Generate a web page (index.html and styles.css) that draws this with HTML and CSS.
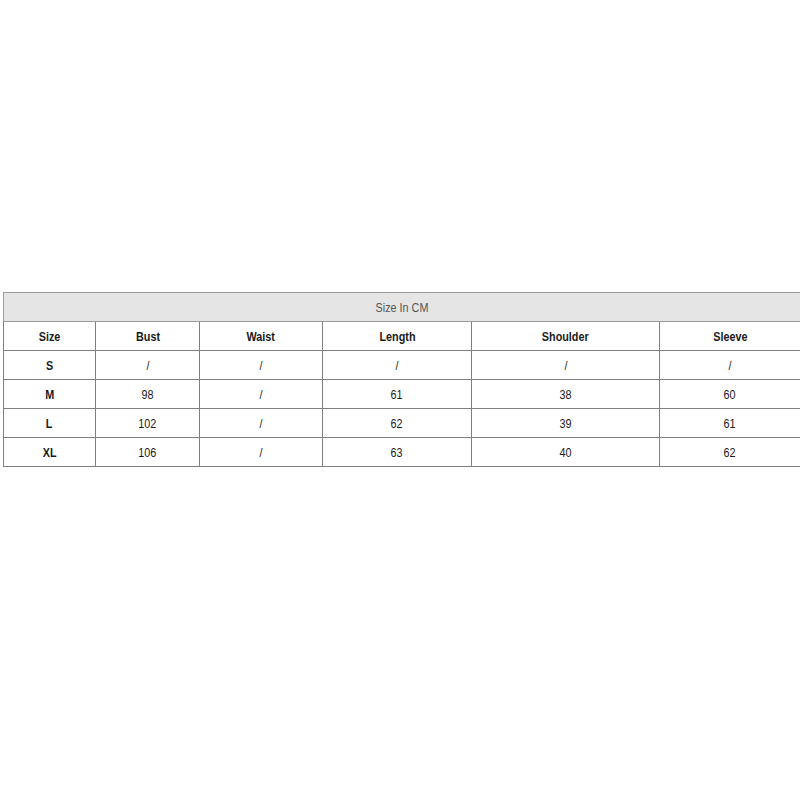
FILE: index.html
```html
<!DOCTYPE html>
<html>
<head>
<meta charset="utf-8">
<link rel="stylesheet" href="styles.css">
</head>
<body>
<div class="page">
<table class="size-table">
  <colgroup>
    <col class="c1"><col class="c2"><col class="c3"><col class="c4"><col class="c5"><col class="c6">
  </colgroup>
  <tr class="title-row"><td colspan="6"><span class="t">Size In CM</span></td></tr>
  <tr class="head-row">
    <th><span class="t">Size</span></th><th><span class="t">Bust</span></th><th><span class="t">Waist</span></th><th><span class="t">Length</span></th><th><span class="t">Shoulder</span></th><th><span class="t">Sleeve</span></th>
  </tr>
  <tr><th><span class="t">S</span></th><td><span class="t">/</span></td><td><span class="t">/</span></td><td><span class="t">/</span></td><td><span class="t">/</span></td><td><span class="t">/</span></td></tr>
  <tr><th><span class="t">M</span></th><td><span class="t">98</span></td><td><span class="t">/</span></td><td><span class="t">61</span></td><td><span class="t">38</span></td><td><span class="t">60</span></td></tr>
  <tr><th><span class="t">L</span></th><td><span class="t">102</span></td><td><span class="t">/</span></td><td><span class="t">62</span></td><td><span class="t">39</span></td><td><span class="t">61</span></td></tr>
  <tr><th><span class="t">XL</span></th><td><span class="t">106</span></td><td><span class="t">/</span></td><td><span class="t">63</span></td><td><span class="t">40</span></td><td><span class="t">62</span></td></tr>
</table>
</div>
</body>
</html>
```

FILE: styles.css
```css
html, body {
  margin: 0;
  padding: 0;
  background: #ffffff;
}
.page {
  padding: 292px 0 0 3px;
}
.size-table {
  width: 797px;
  border-collapse: collapse;
  table-layout: fixed;
  font-family: "Liberation Sans", Arial, sans-serif;
  font-size: 13.5px;
  color: #1a1a1a;
}
.c1 { width: 92px; }
.c2 { width: 104px; }
.c3 { width: 123px; }
.c4 { width: 149px; }
.c5 { width: 188px; }
.c6 { width: 141px; }
.size-table td,
.size-table th {
  border: 1px solid #808080;
  height: 28px;
  padding: 0;
  text-align: center;
  vertical-align: middle;
  font-weight: normal;
}
.size-table th {
  font-weight: bold;
}
.t {
  display: inline-block;
  transform: scaleX(0.8);
}
.title-row td {
  background: #e5e5e5;
  color: #555;
  border-color: #9a9a9a;
}
```
